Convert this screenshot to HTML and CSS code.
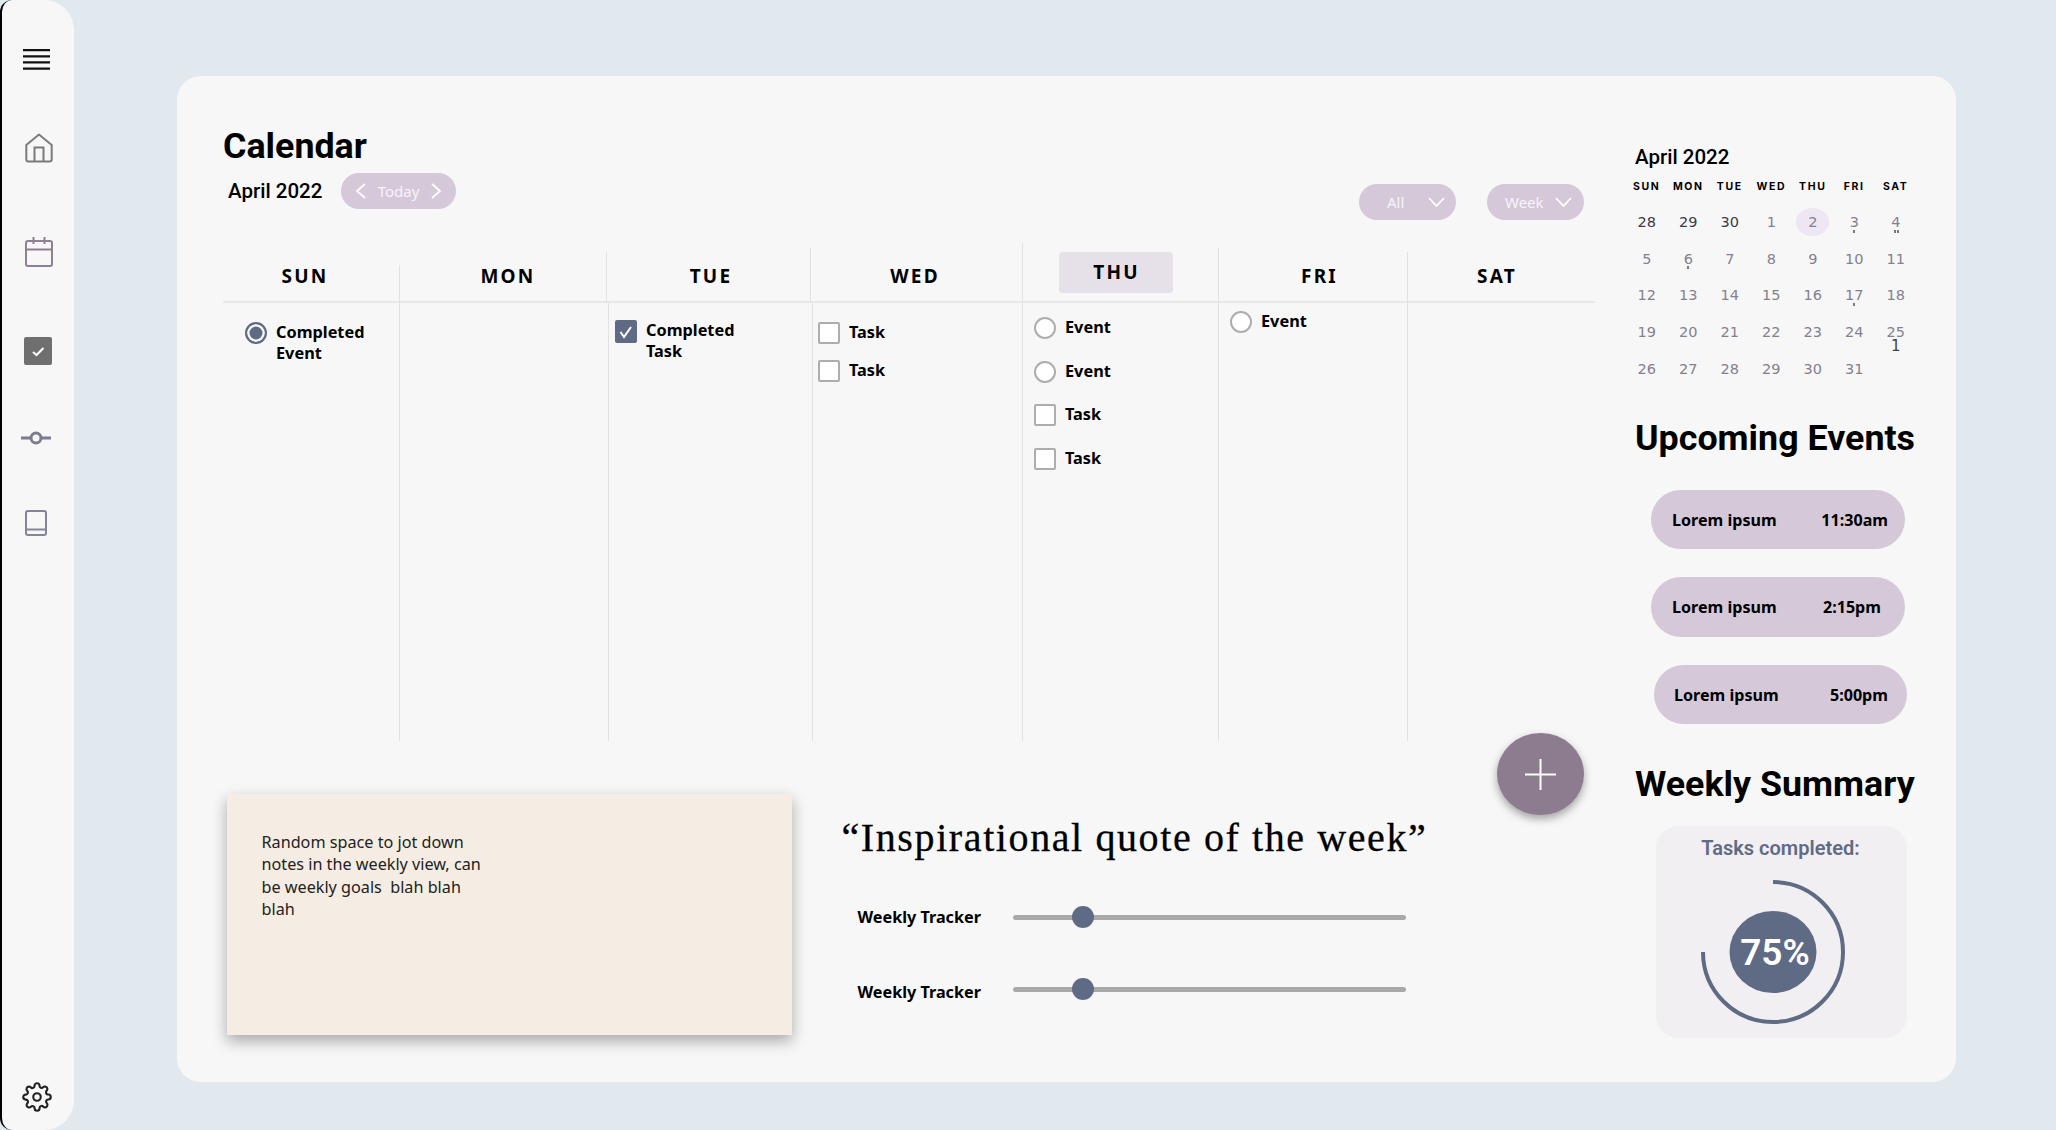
FILE: index.html
```html
<!DOCTYPE html>
<html lang="en">
<head>
<meta charset="utf-8">
<title>Calendar</title>
<link rel="stylesheet" href="styles.css">
</head>
<body>
<nav class="side">
  <svg class="ico ico-menu" width="27" height="21" viewBox="0 0 27 21"><path d="M0 1.2h27M0 7.4h27M0 13.4h27M0 19.6h27" stroke="#111" stroke-width="2.2" fill="none"/></svg>
  <svg class="ico ico-home" width="28" height="30" viewBox="0 0 28 30" fill="none" stroke="#7b7b7b" stroke-width="2"><path d="M14 1.5 26.7 12v14.5a2 2 0 0 1-2 2H3.300a2 2 0 0 1-2-2V12z" stroke-linejoin="round"/><path d="M9.500 28.500V14.500h9v14"/></svg>
  <svg class="ico ico-cal" width="28" height="30" viewBox="0 0 28 30" fill="none" stroke="#8f7f96" stroke-width="2"><rect x="1" y="4" width="26" height="25" rx="2"/><path d="M1 12.500h26M8.500 0v7M19.500 0v7"/></svg>
  <svg class="ico ico-check" width="28" height="28" viewBox="0 0 28 28"><rect width="28" height="28" rx="2" fill="#6f6f6f"/><path d="M9 15l3.500 3L19.500 11" stroke="#fff" stroke-width="2.200" fill="none"/></svg>
  <svg class="ico ico-slide" width="30" height="16" viewBox="0 0 30 16" fill="none" stroke="#7c7c8e" stroke-width="3"><path d="M0 8h9.500M20.500 8H30" stroke-linecap="round"/><circle cx="15" cy="8" r="5"/></svg>
  <svg class="ico ico-book" width="22" height="26" viewBox="0 0 22 26" fill="none" stroke="#84849a" stroke-width="2"><rect x="1" y="1" width="20" height="24" rx="2"/><path d="M1 19.500h20"/></svg>
  <svg class="ico ico-gear" width="30" height="30" viewBox="0 0 24 24" fill="none" stroke="#222" stroke-width="1.700"><circle cx="12" cy="12" r="3"/><path d="M19.400 15a1.650 1.650 0 0 0 .33 1.820l.06.06a2 2 0 0 1 0 2.830 2 2 0 0 1-2.830 0l-.06-.06a1.650 1.650 0 0 0-1.820-.33 1.650 1.650 0 0 0-1 1.510V21a2 2 0 0 1-2 2 2 2 0 0 1-2-2v-.09A1.650 1.650 0 0 0 9 19.400a1.650 1.650 0 0 0-1.820.33l-.06.06a2 2 0 0 1-2.830 0 2 2 0 0 1 0-2.830l.06-.06a1.650 1.650 0 0 0 .33-1.820 1.650 1.650 0 0 0-1.510-1H3a2 2 0 0 1-2-2 2 2 0 0 1 2-2h.09A1.650 1.650 0 0 0 4.600 9a1.650 1.650 0 0 0-.33-1.820l-.06-.06a2 2 0 0 1 0-2.830 2 2 0 0 1 2.830 0l.06.06a1.650 1.650 0 0 0 1.820.33H9a1.650 1.650 0 0 0 1-1.510V3a2 2 0 0 1 2-2 2 2 0 0 1 2 2v.09a1.650 1.650 0 0 0 1 1.510 1.650 1.650 0 0 0 1.820-.33l.06-.06a2 2 0 0 1 2.830 0 2 2 0 0 1 0 2.830l-.06.06a1.650 1.650 0 0 0-.33 1.820V9a1.650 1.650 0 0 0 1.510 1H21a2 2 0 0 1 2 2 2 2 0 0 1-2 2h-.09a1.650 1.650 0 0 0-1.510 1z"/></svg>
</nav>

<main class="card">
  <section class="left">
    <h1 class="title">Calendar</h1>
    <div class="toolbar">
      <span class="month">April 2022</span>
      <div class="pill pill-today">
        <svg width="11" height="16" viewBox="0 0 11 16" fill="none" stroke="#fff" stroke-width="1.800"><path d="M10 1 2 8l8 7"/></svg>
        <span>Today</span>
        <svg width="11" height="16" viewBox="0 0 11 16" fill="none" stroke="#fff" stroke-width="1.800"><path d="M1 1l8 7-8 7"/></svg>
      </div>
      <div class="filters">
        <div class="pill pill-all"><span>All</span><svg width="17" height="10" viewBox="0 0 17 10" fill="none" stroke="#fff" stroke-width="1.800"><path d="M1 1l7.500 8L16 1"/></svg></div>
        <div class="pill pill-week"><span>Week</span><svg width="17" height="10" viewBox="0 0 17 10" fill="none" stroke="#fff" stroke-width="1.800"><path d="M1 1l7.500 8L16 1"/></svg></div>
      </div>
    </div>

    <div class="week">
      <div class="day day-sun">
        <div class="head"><span class="dname">SUN</span></div>
        <div class="items">
          <div class="item"><span class="mark radio radio-done"></span><span class="itxt">Completed<br>Event</span></div>
        </div>
      </div>
      <div class="day day-mon">
        <div class="head"><span class="dname">MON</span></div>
        <div class="items"></div>
      </div>
      <div class="day day-tue">
        <div class="head"><span class="dname">TUE</span></div>
        <div class="items">
          <div class="item"><span class="mark box box-done"><svg width="22" height="23" viewBox="0 0 22 23" fill="none" stroke="#fff" stroke-width="2"><path d="M5.500 12l3.500 5L16 7"/></svg></span><span class="itxt">Completed<br>Task</span></div>
        </div>
      </div>
      <div class="day day-wed">
        <div class="head"><span class="dname">WED</span></div>
        <div class="items">
          <div class="item"><span class="mark box"></span><span class="itxt">Task</span></div>
          <div class="item"><span class="mark box"></span><span class="itxt">Task</span></div>
        </div>
      </div>
      <div class="day day-thu">
        <div class="head"><span class="dname dname-today">THU</span></div>
        <div class="items">
          <div class="item"><span class="mark radio"></span><span class="itxt">Event</span></div>
          <div class="item"><span class="mark radio"></span><span class="itxt">Event</span></div>
          <div class="item"><span class="mark box"></span><span class="itxt">Task</span></div>
          <div class="item"><span class="mark box"></span><span class="itxt">Task</span></div>
        </div>
      </div>
      <div class="day day-fri">
        <div class="head"><span class="dname">FRI</span></div>
        <div class="items">
          <div class="item"><span class="mark radio"></span><span class="itxt">Event</span></div>
        </div>
      </div>
      <div class="day day-sat">
        <div class="head"><span class="dname">SAT</span></div>
        <div class="items"></div>
      </div>
    </div>

    <div class="lower">
      <div class="note">Random space to jot down<br>notes in the weekly view, can<br>be weekly goals&nbsp; blah blah<br>blah</div>
      <div class="inspire">
        <div class="quote">“Inspirational quote of the week”</div>
        <div class="tracker"><span class="tlabel">Weekly Tracker</span><div class="track"><span class="thumb"></span></div></div>
        <div class="tracker tracker-2"><span class="tlabel">Weekly Tracker</span><div class="track"><span class="thumb"></span></div></div>
      </div>
    </div>
  </section>

  <aside class="right">
    <div class="mini-title">April 2022</div>
    <div class="mini-head"><span>SUN</span><span>MON</span><span>TUE</span><span>WED</span><span>THU</span><span>FRI</span><span>SAT</span></div>
    <div class="mini-grid">
      <span class="d d-old">28</span><span class="d d-old">29</span><span class="d d-old">30</span><span class="d">1</span><span class="d d-now">2</span><span class="d dot">3</span><span class="d dot2">4</span>
      <span class="d">5</span><span class="d dot">6</span><span class="d">7</span><span class="d">8</span><span class="d">9</span><span class="d">10</span><span class="d">11</span>
      <span class="d">12</span><span class="d">13</span><span class="d">14</span><span class="d">15</span><span class="d">16</span><span class="d dot">17</span><span class="d">18</span>
      <span class="d">19</span><span class="d">20</span><span class="d">21</span><span class="d">22</span><span class="d">23</span><span class="d">24</span><span class="d">25<b class="count">1</b></span>
      <span class="d">26</span><span class="d">27</span><span class="d">28</span><span class="d">29</span><span class="d">30</span><span class="d">31</span>
    </div>

    <h2 class="h2 h2-up">Upcoming Events</h2>
    <div class="ev ev-1"><span>Lorem ipsum</span><span>11:30am</span></div>
    <div class="ev ev-2"><span>Lorem ipsum</span><span>2:15pm</span></div>
    <div class="ev ev-3"><span>Lorem ipsum</span><span>5:00pm</span></div>

    <h2 class="h2 h2-sum">Weekly Summary</h2>
    <div class="summary">
      <div class="sum-label">Tasks completed:</div>
      <svg class="ring" width="146" height="146" viewBox="0 0 146 146">
        <path d="M73 3A70 70 0 1 1 3 73" fill="none" stroke="#5f6b85" stroke-width="4"/>
        <ellipse cx="73" cy="73" rx="43.500" ry="41" fill="#5f6b85"/>
        <text class="pct" x="75" y="86" text-anchor="middle">75%</text>
      </svg>
    </div>
  </aside>

  <div class="fab"><svg width="31" height="31" viewBox="0 0 31 31" stroke="#fff" stroke-width="2"><path d="M15.500 0v31M0 15.500h31"/></svg></div>
</main>
</body>
</html>
```

FILE: styles.css
```css
* { box-sizing: border-box; }
html, body { margin: 0; height: 1130px; }
body {
  display: flex;
  overflow: hidden;
  background: #e1e9ef;
  font-family: "Noto Sans", sans-serif;
  color: #000;
}

/* sidebar */
.side {
  width: 74px;
  height: 1130px;
  flex: none;
  display: flex;
  flex-direction: column;
  align-items: flex-start;
  background: #f7f7f7;
  border-left: 2px solid #000;
  border-radius: 12px 30px 30px 12px;
  padding-top: 49px;
  padding-bottom: 18px;
}
.ico { display: block; flex: none; }
.ico-menu { margin-left: 21px; }
.ico-home { margin-left: 23px; margin-top: 63px; }
.ico-cal { margin-left: 22.500px; margin-top: 74px; }
.ico-check { margin-left: 22px; margin-top: 70px; }
.ico-slide { margin-left: 19px; margin-top: 65px; }
.ico-book { margin-left: 22.500px; margin-top: 64px; }
.ico-gear { margin-left: 19.500px; margin-top: auto; }

/* main card */
.card {
  position: relative;
  width: 1779px;
  height: 1006px;
  margin: 76px 0 0 103px;
  flex: none;
  display: flex;
  background: #f7f7f7;
  border-radius: 24px;
  padding: 46px 0 0 46px;
}
.left { width: 1372px; flex: none; }
.title {
  margin: 0;
  padding-top: 3px;
  height: 42px;
  font: 700 35.800px/42px Roboto, sans-serif;
}
.toolbar {
  display: flex;
  align-items: flex-start;
  margin-top: 9px;
  height: 47px;
}
.month {
  font: 500 20.500px/36px Roboto, sans-serif;
  margin-left: 5px;
  width: 113px;
}
.pill {
  display: flex;
  align-items: center;
  height: 36px;
  border-radius: 18px;
  background: #d5c8d9;
  color: #f8f4f9;
  font-size: 15px;
}
.pill-today {
  width: 115px;
  justify-content: space-between;
  padding: 0 14px;
}
.filters {
  display: flex;
  gap: 31px;
  margin-left: auto;
  margin-right: 11px;
  margin-top: 11px;
}
.pill-all { width: 97px; padding-left: 28px; gap: 24px; }
.pill-week { width: 97px; padding-left: 18px; gap: 11px; }

/* week grid */
.week {
  display: grid;
  grid-template-columns: 176px 207px 204px 212px 196px 189px 188px;
  height: 498px;
  margin-top: 23px;
}
.day { position: relative; display: flex; flex-direction: column; }
.day::before {
  content: "";
  position: absolute;
  left: 0;
  bottom: 0;
  width: 1px;
  background: #e2e2e2;
}
.day-sun::before { display: none; }
.day-mon::before { top: 22px; }
.day-tue::before { top: 9px; bottom: auto; height: 51px; }
.day-wed::before { top: 5px; bottom: auto; height: 55px; }
.day-thu::before { top: 0; }
.day-fri::before { top: 5px; }
.day-sat::before { top: 9px; }
.head {
  height: 60px;
  flex: none;
  padding-bottom: 12px;
  display: flex;
  align-items: flex-end;
  justify-content: center;
  border-bottom: 2px solid #e8e8e8;
}
.day-sun .head { padding-right: 14px; }
.day-mon .head { padding-left: 9px; }
.day-tue .head { padding-left: 4px; }
.day-wed .head { padding-right: 4px; }
.day-thu .head { padding-right: 9px; padding-bottom: 0; align-items: center; }
.day-fri .head { padding-left: 12px; }
.day-sat .head { padding-right: 10px; }
.dname {
  font: 700 19px/25px "Noto Sans", sans-serif;
  letter-spacing: 2.200px;
  padding-left: 2px;
}
.dname-today {
  width: 114px;
  height: 41px;
  line-height: 41px;
  text-align: center;
  background: #e6e0e8;
  border-radius: 4px;
}
.items { display: flex; flex-direction: column; flex: 1; }
.day-sun .items { padding: 19px 0 0 22px; }
.day-tue .items { margin-left: 2px; border-left: 1px solid #e2e2e2; padding: 17px 0 0 6px; }
.day-wed .items { margin-left: 2px; border-left: 1px solid #e2e2e2; padding: 19px 0 0 5px; gap: 16px; }
.day-thu .items { padding: 14px 0 0 12px; gap: 21.500px; }
.day-fri .items { padding: 8px 0 0 12px; }
.item { display: flex; align-items: flex-start; gap: 9px; }
.mark {
  display: block;
  flex: none;
  width: 22px;
  height: 22px;
  border: 2.500px solid #adadad;
  background: #fff;
}
.radio { border-radius: 50%; }
.box { border-radius: 2px; }
.radio-done {
  border-width: 2px;
  border-color: #5f6b85;
  background: #5f6b85;
  box-shadow: inset 0 0 0 2.500px #f7f7f7;
}
.box-done { border: 0; background: #5f6b85; height: 23px; }
.box-done svg { display: block; }
.itxt { font: 700 16.300px/21px "Noto Sans", sans-serif; }

/* lower area */
.lower { display: flex; margin-top: 53px; margin-left: 3.500px; }
.note {
  width: 565px;
  height: 241px;
  flex: none;
  background: #f5ede3;
  box-shadow: 0 6px 14px rgba(0, 0, 0, .32);
  padding: 37px 0 0 35px;
  font-size: 16.200px;
  line-height: 22.300px;
  color: #222;
}
.inspire { margin-left: 52px; }
.quote {
  font: 40px/50px "Liberation Serif", serif;
  letter-spacing: 1.600px;
  -webkit-text-stroke: .3px #000;
  margin-top: 19px;
  margin-left: -2px;
  white-space: nowrap;
}
.tracker {
  display: flex;
  align-items: center;
  height: 22px;
  margin-top: 43px;
  margin-left: 14px;
}
.tracker-2 { margin-top: 50px; }
.tracker-2 .tlabel { padding-top: 6px; }
.tlabel {
  width: 155px;
  flex: none;
  font: 700 16.200px/22px "Noto Sans", sans-serif;
  white-space: nowrap;
}
.track {
  position: relative;
  width: 393px;
  height: 5px;
  border-radius: 3px;
  background: #a9a9a9;
}
.thumb {
  position: absolute;
  left: 59px;
  top: -8.500px;
  width: 22px;
  height: 22px;
  border-radius: 50%;
  background: #5f6b85;
}

/* right column */
.right { margin-left: 31px; width: 300px; padding-top: 23px; }
.mini-title {
  font: 500 20.500px/24px Roboto, sans-serif;
  margin-left: 9px;
}
.mini-head {
  display: grid;
  grid-template-columns: repeat(7, 41.500px);
  margin-top: 10px;
  height: 16px;
  font: 700 10.500px/16px Inter, sans-serif;
  letter-spacing: 1.600px;
  text-align: center;
}
.mini-grid {
  display: grid;
  grid-template-columns: repeat(7, 41.500px);
  grid-auto-rows: 36.700px;
  margin-top: 8.500px;
}
.d {
  position: relative;
  display: flex;
  align-items: center;
  justify-content: center;
  font: 14.500px "DejaVu Sans", sans-serif;
  color: #85808f;
}
.d-old { color: #3c3a48; }
.d-now { isolation: isolate; }
.d-now::before {
  content: "";
  position: absolute;
  z-index: -1;
  left: 4px;
  top: 4px;
  width: 33px;
  height: 28px;
  border-radius: 50%;
  background: #efe6f3;
}
.dot::after, .dot2::after {
  content: "";
  position: absolute;
  left: 50%;
  top: 26px;
  width: 2px;
  height: 3px;
  margin-left: -1px;
  background: #7d7889;
}
.dot2::after { box-shadow: 3px 0 #7d7889; margin-left: -2px; }
.count {
  position: absolute;
  left: 0;
  right: 0;
  top: 23px;
  text-align: center;
  font: 15px/18px "DejaVu Sans", sans-serif;
  color: #3f3f4f;
}
.h2 {
  margin: 0 0 0 9px;
  font: 700 35.800px/42px Roboto, sans-serif;
  white-space: nowrap;
}
.h2-up { margin-top: 30px; }
.h2-sum { margin-top: 39px; }
.ev {
  display: flex;
  justify-content: space-between;
  align-items: center;
  width: 254px;
  height: 59.500px;
  margin-left: 25px;
  margin-top: 28px;
  padding: 0 17px 0 21px;
  border-radius: 30px;
  background: #d5c8d9;
  font: 700 16.100px/22px "Noto Sans", sans-serif;
}
.ev-1 { margin-top: 31px; }
.ev-2 { padding-right: 24px; }
.ev-3 { margin-left: 28px; width: 253px; padding: 0 19px 0 20px; }
.summary {
  width: 251px;
  height: 212px;
  margin: 21px 0 0 30px;
  padding-top: 10px;
  padding-right: 2px;
  border-radius: 22px;
  background: #f1eff2;
}
.sum-label {
  font: 600 20px/24px Roboto, sans-serif;
  color: #5f6b85;
  text-align: center;
}
.ring { display: block; margin: 19px 0 0 44px; }
.pct { font: 600 37px Roboto, sans-serif; fill: #fff; }

.fab {
  position: absolute;
  left: 1320px;
  top: 657px;
  width: 87px;
  height: 82px;
  border-radius: 50%;
  background: #8d7b90;
  box-shadow: 0 4px 8px rgba(0, 0, 0, .35);
  display: flex;
  align-items: center;
  justify-content: center;
}
.fab svg { display: block; }
```
